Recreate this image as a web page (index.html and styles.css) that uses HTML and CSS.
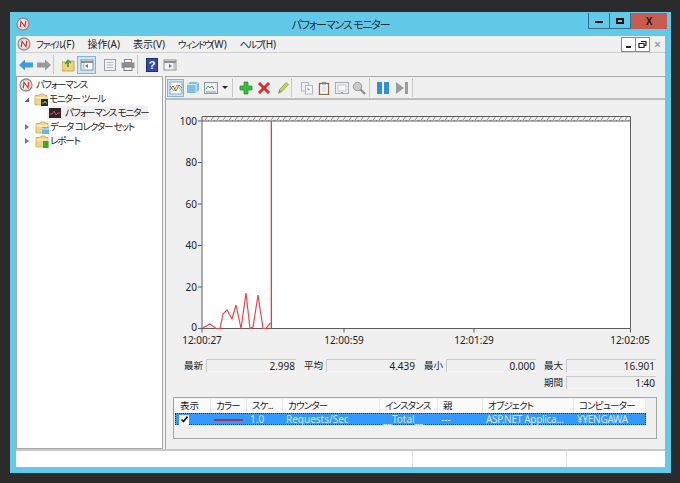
FILE: index.html
```html
<!DOCTYPE html>
<html lang="ja">
<head>
<meta charset="utf-8">
<title>パフォーマンス モニター</title>
<link rel="stylesheet" href="styles.css">
</head>
<body>
<svg class="defs" width="0" height="0" aria-hidden="true">
  <symbol id="logo" viewBox="0 0 14 14">
    <circle cx="7" cy="7" r="6" fill="#f6f2f0" stroke="#8d8d8d" stroke-width="1.300"/>
    <circle cx="7" cy="7" r="4.300" fill="none" stroke="#e9a9a9" stroke-width=".7"/>
    <path d="M4.300 9.800 5 4.500 9 9.500 9.700 4.200" fill="none" stroke="#c83030" stroke-width="1.200"/>
  </symbol>
  <symbol id="folder" viewBox="0 0 14 14">
    <path d="M1 3.500h4l1-1.500h4l1 1.500h2v9.500H1z" fill="#f2d488" stroke="#c9a95e" stroke-width=".8"/>
    <path d="M1.500 5h11v1.500h-11z" fill="#fbeec4"/>
  </symbol>
</svg>
<div class="window">
  <header class="titlebar">
    <svg class="ico14 title-logo"><use href="#logo"/></svg>
    <span class="title-text">パフォーマンス モニター</span>
    <div class="caption">
      <span class="cap cap-min"><i></i></span>
      <span class="cap cap-max"><i></i></span>
      <span class="cap cap-close">X</span>
    </div>
  </header>

  <div class="client">
    <nav class="menubar">
      <svg class="ico14 menu-logo"><use href="#logo"/></svg>
      <span class="menu-item"><span class="k">ファイル</span>(F)</span>
      <span class="menu-item">操作(A)</span>
      <span class="menu-item">表示(V)</span>
      <span class="menu-item"><span class="k">ウィンドウ</span>(W)</span>
      <span class="menu-item"><span class="k">ヘルプ</span>(H)</span>
      <div class="mdi">
        <span class="mdi-btn"><i class="mdi-min"></i></span>
        <span class="mdi-btn"><svg width="9" height="9" viewBox="0 0 9 9"><path d="M3 1.500h5v4H6.500M1 3.500h5v4H1z" fill="none" stroke="#222" stroke-width="1.200"/></svg></span>
        <span class="mdi-close">×</span>
      </div>
    </nav>

    <div class="toolbar">
      <svg class="ico14" viewBox="0 0 14 14"><path d="M0 7 6 1.500V4.500h8v5H6v3z" fill="#3b9ee0"/></svg>
      <svg class="ico14 g4" viewBox="0 0 14 14"><path d="M14 7 8 1.500V4.500H0v5h8v3z" fill="#9a9a9a"/></svg>
      <span class="sep m2"></span>
      <svg class="ico14 g8" viewBox="0 0 14 14"><path d="M0 4h4l1-1h7v10H0z" fill="#f0d27a" stroke="#b59a4c" stroke-width=".8"/><path d="M6 9V4M3.500 6 6 2.500 9 5" fill="none" stroke="#3da23d" stroke-width="1.600"/></svg>
      <span class="tool-on"><svg class="ico14" viewBox="0 0 14 14"><rect x="1" y="2" width="12" height="10" fill="#fff" stroke="#8a8f93"/><path d="M1 4h12" stroke="#8a8f93" stroke-width="2"/><path d="M8 6 5 8l3 2z" fill="#3a9a55"/><path d="M3.500 5v6" stroke="#c4c9cc" stroke-width="2"/></svg></span>
      <svg class="ico14 g7" viewBox="0 0 14 14"><rect x="1.500" y="1.500" width="11" height="11" fill="#eef1f3" stroke="#9aa0a5"/><path d="M4 4.500h6M4 7h6M4 9.500h6" stroke="#b5bbc0"/></svg>
      <svg class="ico14 g4" viewBox="0 0 14 14"><rect x="3.500" y="1.500" width="7" height="3" fill="#fff" stroke="#888"/><rect x=".5" y="4.500" width="13" height="5.500" fill="#8a8f93"/><rect x="3" y="9" width="8" height="3.500" fill="#fff" stroke="#777"/></svg>
      <span class="sep m2"></span>
      <svg class="ico14 g8" viewBox="0 0 14 14"><rect x=".5" y=".5" width="11" height="13" fill="#2f4aa8" stroke="#1d2f78"/><text x="6" y="11" class="help-q">?</text></svg>
      <svg class="ico14 g3" viewBox="0 0 14 14"><rect x="1" y="2" width="12" height="10" fill="#f4f4f4" stroke="#8a8f93"/><path d="M1 4h12" stroke="#8a8f93" stroke-width="2"/><path d="M6 6l3 2-3 2z" fill="#3a9a55"/><path d="M11 5v6" stroke="#c4c9cc" stroke-width="2"/></svg>
    </div>

    <div class="panes">
      <aside class="tree">
        <div class="node lv0"><svg class="ico14"><use href="#logo"/></svg><span class="t">パフォーマンス</span></div>
        <div class="node lv1"><i class="tw open"></i><span class="folder-wrap"><svg class="ico14"><use href="#folder"/></svg><svg class="badge" viewBox="0 0 7 7"><rect width="7" height="7" fill="#2b2b2b"/><path d="M1 4h2l1-2 1 2h1" fill="none" stroke="#7fd67f" stroke-width=".8"/></svg></span><span class="t">モニター ツール</span></div>
        <div class="node lv2"><div class="picked"><svg class="ico14" viewBox="0 0 14 14"><rect x="0" y="2" width="12" height="10" fill="#2a2626"/><path d="M1 8h2l2-3 2 4 2-2h2" fill="none" stroke="#e04a4a"/></svg><span class="t">パフォーマンス モニター</span></div></div>
        <div class="node lv1"><i class="tw"></i><span class="folder-wrap"><svg class="ico14"><use href="#folder"/></svg><svg class="badge" viewBox="0 0 7 7"><rect width="7" height="7" fill="#6fb4dd"/><path d="M0 2h7" stroke="#d5ecf8"/></svg></span><span class="t">データ コレクター セット</span></div>
        <div class="node lv1"><i class="tw"></i><span class="folder-wrap"><svg class="ico14"><use href="#folder"/></svg><svg class="badge" viewBox="0 0 7 7"><rect x="1" width="5.500" height="7" fill="#27b52f"/></svg></span><span class="t">レポート</span></div>
      </aside>

      <main class="detail">
        <div class="subtools">
          <span class="tool-on on-sub"><svg class="ico14" viewBox="0 0 14 14"><rect x="1" y="1" width="12" height="12" fill="#fff" stroke="#8fa3b5"/><path d="M1 9l3-4 3 5 3-6 3 3" fill="none" stroke="#3bb04a"/><path d="M1 5l4 5 3-6 5 6" fill="none" stroke="#d05a5a" stroke-width=".8"/></svg></span>
          <svg class="ico14 g2" viewBox="0 0 14 14"><path d="M1 3.500 4 1h9v8l-3 3H1z" fill="#7cc0e3"/><path d="M1 3.500h9V12M10 3.500 13 1" fill="none" stroke="#d9eef9"/></svg>
          <svg class="ico14 g4" viewBox="0 0 14 14"><rect x=".5" y="1.500" width="13" height="11" fill="#e8edf1" stroke="#8c98a3"/><rect x="2" y="4" width="10" height="5" fill="#fff"/><path d="M2 8l2-3 2 2 2-2 2 3" fill="none" stroke="#4aa04a"/><path d="M2 11h10" stroke="#8c98a3"/></svg>
          <i class="caret"></i>
          <span class="sep m4"></span>
          <svg class="ico14 g6" viewBox="0 0 14 14"><path d="M5 1h4v4h4v4H9v4H5V9H1V5h4z" fill="#3dbb3d" stroke="#1f8a2a" stroke-width=".7"/></svg>
          <svg class="ico14 g4" viewBox="0 0 14 14"><path d="M1 3 3 1l4 4 4-4 2 2-4 4 4 4-2 2-4-4-4 4-2-2 4-4z" fill="#dd2a2a"/></svg>
          <svg class="ico14 g5" viewBox="0 0 14 14"><path d="M3 9 10 1.500 12.500 3.500 5.500 11z" fill="#c4cf55" stroke="#7c8d34" stroke-width=".6"/><path d="M3 9 2 13l3.500-2z" fill="#8a8a8a"/></svg>
          <span class="sep m1"></span>
          <svg class="ico14 g8 faded" viewBox="0 0 14 14"><rect x="1.500" y="1.500" width="7" height="8.500" fill="#eef0f3" stroke="#a8adb5"/><rect x="5.500" y="4.500" width="7" height="8.500" fill="#f7f8fa" stroke="#a8adb5"/><path d="M7 6l3 3-2 .5z" fill="#6a8fc0"/></svg>
          <svg class="ico14 g3" viewBox="0 0 14 14"><rect x="2.500" y="2.500" width="9" height="11" fill="#fff" stroke="#8d6b45" stroke-width="1.300"/><rect x="5" y="1" width="4" height="2.500" fill="#888"/><path d="M4.500 6h5M4.500 8h5M4.500 10h5" stroke="#c9c9c9"/></svg>
          <svg class="ico14 g4 faded" viewBox="0 0 14 14"><rect x=".5" y="1.500" width="13" height="11" fill="#eef1f3" stroke="#9aa0a5"/><rect x="3" y="4" width="8" height="6" fill="#fff" stroke="#b9bfc4"/><path d="M6 12h2" stroke="#5ab0dc" stroke-width="2"/></svg>
          <svg class="ico14 g3" viewBox="0 0 14 14"><circle cx="5.500" cy="5.500" r="4.200" fill="#c9c9c9" stroke="#9d9d9d"/><path d="M8.500 8.500 13 13" stroke="#8e8e8e" stroke-width="2.400"/></svg>
          <span class="sep m3"></span>
          <svg class="ico14 g7" viewBox="0 0 14 14"><path d="M0 1h5v12H0zM7 1h5v12H7z" fill="#2f8fd0"/></svg>
          <svg class="ico14 g5" viewBox="0 0 14 14"><path d="M0 1l8 6-8 6z" fill="#9c9c9c"/><path d="M9 1h3v12H9z" fill="#9c9c9c"/></svg>
          <span class="sep m2"></span>
        </div>

        <svg class="chart" viewBox="165 100 499 252" width="499" height="252">
          <defs>
            <pattern id="hatch" width="6" height="5" patternUnits="userSpaceOnUse">
              <path d="M0 5 4 0" stroke="#777" stroke-width=".8"/>
            </pattern>
          </defs>
          <rect x="201" y="116.500" width="428" height="5" fill="url(#hatch)"/>
          <rect x="201" y="121" width="428" height="207.500" fill="#fff"/>
          <path d="M201 116.500H629.500V328.500H201V116.500M201 121H629.500" fill="none" stroke="#5c5c5c" stroke-width="1"/>
          <path d="M197 121h4M197 162.500h4M197 204h4M197 245.500h4M197 287h4M197 328.500h4M343 328.500v4M473 328.500v4M629.500 328.500v4M201 328.500v4" stroke="#5c5c5c"/>
          <polyline class="trace" points="201.700,328 209,324 215,328.500 219,328.500 222,314 226,310 231,319 235,305 240,328.500 245,293 249,328.500 252,327 257,295 262,328.500 265,328.500 269.500,323"/>
          <rect class="trace-bar" x="269.700" y="121" width="1.300" height="207"/>
          <g class="axis">
            <text x="196" y="125" text-anchor="end">100</text>
            <text x="196" y="166" text-anchor="end">80</text>
            <text x="196" y="208" text-anchor="end">60</text>
            <text x="196" y="249" text-anchor="end">40</text>
            <text x="196" y="291" text-anchor="end">20</text>
            <text x="196" y="331" text-anchor="end">0</text>
            <text x="201" y="344" text-anchor="middle">12:00:27</text>
            <text x="343" y="344" text-anchor="middle">12:00:59</text>
            <text x="473" y="344" text-anchor="middle">12:01:29</text>
            <text x="629" y="344" text-anchor="middle">12:02:05</text>
          </g>
        </svg>

        <div class="stats">
          <div class="stat"><label>最新</label><output>2.998</output></div>
          <div class="stat"><label>平均</label><output>4.439</output></div>
          <div class="stat"><label>最小</label><output>0.000</output></div>
          <div class="stat"><label>最大</label><output>16.901</output></div>
          <div class="stat stat-end"><label>期間</label><output>1:40</output></div>
        </div>

        <div class="legend">
          <div class="lrow lhead">
            <span>表示</span><span class="k2">カラー</span><span class="k2">スケ...</span><span class="k2">カウンター</span><span class="k2">インスタンス</span><span>親</span><span class="k2">オブジェクト</span><span class="k2">コンピューター</span>
          </div>
          <div class="lrow lsel">
            <span><i class="check"><svg width="9" height="9" viewBox="0 0 9 9"><path d="M1.500 4.500 3.500 6.500 7.500 1.500" fill="none" stroke="#111" stroke-width="1.700"/></svg></i></span>
            <span><i class="swatch"></i></span>
            <span>1.0</span><span>Requests/Sec</span><span>__Total__</span><span>---</span><span class="tight">ASP.NET Applica...</span><span class="tight">¥¥ENGAWA</span>
          </div>
        </div>
      </main>
    </div>

    <footer class="statusbar"><span class="st-a"></span><span class="st-b"></span><span class="st-c"></span></footer>
  </div>
</div>
</body>
</html>
```

FILE: styles.css
```css
* { box-sizing: border-box; }
html, body { margin: 0; height: 100%; }
body {
  background: #2b2b2b;
  padding: 12px 9px 10px 10px;
  font: 10px/1.2 "Noto Sans", "Noto Sans CJK JP", sans-serif;
  font-feature-settings: "palt";
  color: #222;
  overflow: hidden;
}
.defs { position: absolute; }
.ico14 { width: 14px; height: 14px; flex: none; display: block; }
.g2 { margin-left: 2px; } .g3 { margin-left: 3px; } .g4 { margin-left: 4px; } .g5 { margin-left: 5px; }
.g6 { margin-left: 6px; } .g7 { margin-left: 7px; } .g8 { margin-left: 8px; }
.m1 { margin-left: 1px; } .m2 { margin-left: 2px; } .m3 { margin-left: 3px; } .m4 { margin-left: 4px; }

.window {
  height: 461px;
  background: #63c9e9;
  padding: 0 6px 6px 6px;
  display: flex;
  flex-direction: column;
}
.titlebar {
  height: 24px;
  flex: none;
  position: relative;
  display: flex;
  align-items: center;
  justify-content: center;
}
.title-logo { position: absolute; left: 0; top: 5px; }
.title-text { font-size: 11px; letter-spacing: -1.2px; color: #1c2b33; padding-top: 2px; }
.caption {
  position: absolute;
  right: -2px;
  top: 1px;
  display: flex;
  height: 16px;
}
.cap {
  display: flex;
  align-items: center;
  justify-content: center;
  border: 1px solid #2f6f88;
  border-top: 0;
  width: 22px;
}
.cap-max { border-left: 0; width: 21px; }
.cap-min i { width: 8px; height: 2px; background: #111; margin-top: 2px; }
.cap-max i { width: 8px; height: 6px; border: 2px solid #111; }
.cap-close {
  width: 36px;
  background: #c75b50;
  border: 0;
  color: #1b1b1b;
  font: bold 10px "Liberation Sans", sans-serif;
}

.client { flex: 1; display: flex; flex-direction: column; background: #f0f0f0; min-height: 0; }

.menubar {
  height: 17px;
  flex: none;
  display: flex;
  align-items: center;
  border-bottom: 1px solid #cfcfcf;
  padding-left: 1px;
  background: #f0f0f0;
}
.menu-logo { margin-right: 5px; }
.menu-item { margin-right: 13px; font-size: 10px; white-space: nowrap; }
.k { font-size: 9.500px; letter-spacing: -1.400px; }
.mdi { margin-left: auto; display: flex; align-items: center; height: 16px; }
.mdi-btn {
  width: 15px; height: 15px;
  border: 1px solid #8a8a8a;
  background: #fff;
  margin-right: -1px;
  display: flex; align-items: center; justify-content: center;
}
.mdi-min { width: 5px; height: 2px; background: #222; margin-top: 5px; }
.mdi-close { width: 15px; text-align: center; color: #9a9a9a; font: bold 11px "Liberation Sans", sans-serif; margin-left: 1px; }

.toolbar {
  height: 23px;
  flex: none;
  display: flex;
  align-items: center;
  padding-left: 3px;
  background: #f0f0f0;
}
.sep { width: 1px; height: 19px; background: #c8c8c8; flex: none; }
.tool-on {
  width: 19px; height: 18px; margin-left: 1px; flex: none;
  display: flex; align-items: center; justify-content: center;
  background: #cbe6f6;
  border: 1px solid #7db7dc;
}

.panes { flex: 1; display: flex; min-height: 0; gap: 2px; background: #f0f0f0; }
.tree {
  width: 147px;
  flex: none;
  background: #fff;
  border: 1px solid #a8a8a8;
  padding-top: 1px;
}
.node { height: 14px; display: flex; align-items: center; gap: 3px; font-size: 9.500px; white-space: nowrap; }
.t { letter-spacing: -1.100px; }
.lv0 { padding-left: 2px; }
.lv1 { padding-left: 7px; }
.lv2 { padding-left: 30px; }
.tw { width: 0; height: 0; flex: none; margin-right: 3px;
  border-left: 4px solid #777; border-top: 3px solid transparent; border-bottom: 3px solid transparent; margin-left: 1px; }
.tw.open { border: 0; width: 5px; height: 5px; background: linear-gradient(135deg, transparent 50%, #666 50%); margin-left: 0; margin-right: 2px; }
.folder-wrap { position: relative; display: block; margin-right: -2px; width: 14px; height: 14px; flex: none; }
.badge { position: absolute; right: 0; bottom: 0; width: 7px; height: 7px; }
.picked { display: flex; align-items: center; gap: 2px; background: #f0f0f0; height: 14px; width: 101px; padding-left: 2px; }

.detail { flex: 1; min-width: 0; display: flex; flex-direction: column; border: solid #a8a8a8; border-width: 1px 0 0 1px; }
.subtools {
  height: 23px;
  flex: none;
  display: flex;
  align-items: center;
  padding-left: 1px;
  border-bottom: 2px solid #bdbdbd;
}
.on-sub { width: 17px; height: 18px; margin-left: 0; }
.caret { width: 0; height: 0; margin-left: 4px; flex: none; border: 3px solid transparent; border-top: 3px solid #222; border-bottom: 0; }
.faded { opacity: .85; }
.help-q { font: bold 11px "Liberation Sans", sans-serif; fill: #fff; text-anchor: middle; }

.chart { display: block; flex: none; }
.trace { fill: none; stroke: #e8454f; stroke-width: 1.200; }
.trace-bar { fill: #ea3a46; }
.axis text { font: 10px "Noto Sans", sans-serif; fill: #222; }

.stats {
  display: grid;
  grid-template-columns: repeat(4, 120px);
  row-gap: 4px;
  padding: 7px 0 0 18px;
  flex: none;
}
.stat { display: flex; align-items: center; gap: 3px; height: 13px; }
.stat-end { grid-column: 4; }
.stat label { width: 19px; font-size: 9.500px; flex: none; white-space: nowrap; }
.stat output {
  width: 90px; height: 13px;
  background: #f0f0f0;
  border: solid #c9c9c9;
  border-width: 1px 0 0 1px;
  text-align: right;
  padding-right: 1px;
  font-size: 10px;
  line-height: 12px;
  box-shadow: inset 0 -1px 0 #f7f7f7;
}

.legend {
  margin: 8px 0 0 7px;
  width: 484px;
  height: 42px;
  border: 1px solid #a3a3a3;
  padding: 1px 0 0 1px;
  flex: none;
}
.lrow {
  display: grid;
  grid-template-columns: 36px 36px 36px 97px 58px 45px 91px 72px;
  width: 471px;
}
.lrow > span { white-space: nowrap; display: flex; align-items: center; }
.lhead { height: 14px; background: #fbfbfb; font-size: 9.500px; }
.lhead > span { border-right: 1px solid #e6e6e6; padding-left: 5px; overflow: hidden; }
.k2 { letter-spacing: -.8px; }
.lsel {
  height: 12px;
  grid-template-columns: 35px 36px 36px 97px 58px 45px 91px 70px;
  background: #3399ff;
  color: #d9ecff;
  font-size: 10px;
  border: 1px dotted #333;
  line-height: 11px;
}
.lsel > span { padding-left: 3px; }
.tight { letter-spacing: -.3px; }
.check { width: 10px; height: 10px; background: #fff; display: flex; align-items: center; justify-content: center; }
.swatch { width: 29px; height: 2px; background: #a8305f; }

.statusbar {
  height: 18px;
  flex: none;
  display: flex;
  background: #fff;
  border-top: 2px solid #c8c8c8;
}
.st-a { width: 396px; }
.st-b { flex: 1; border-left: 1px solid #e2e2e2; }
.st-c { width: 99px; border-left: 1px solid #e2e2e2; }
```
